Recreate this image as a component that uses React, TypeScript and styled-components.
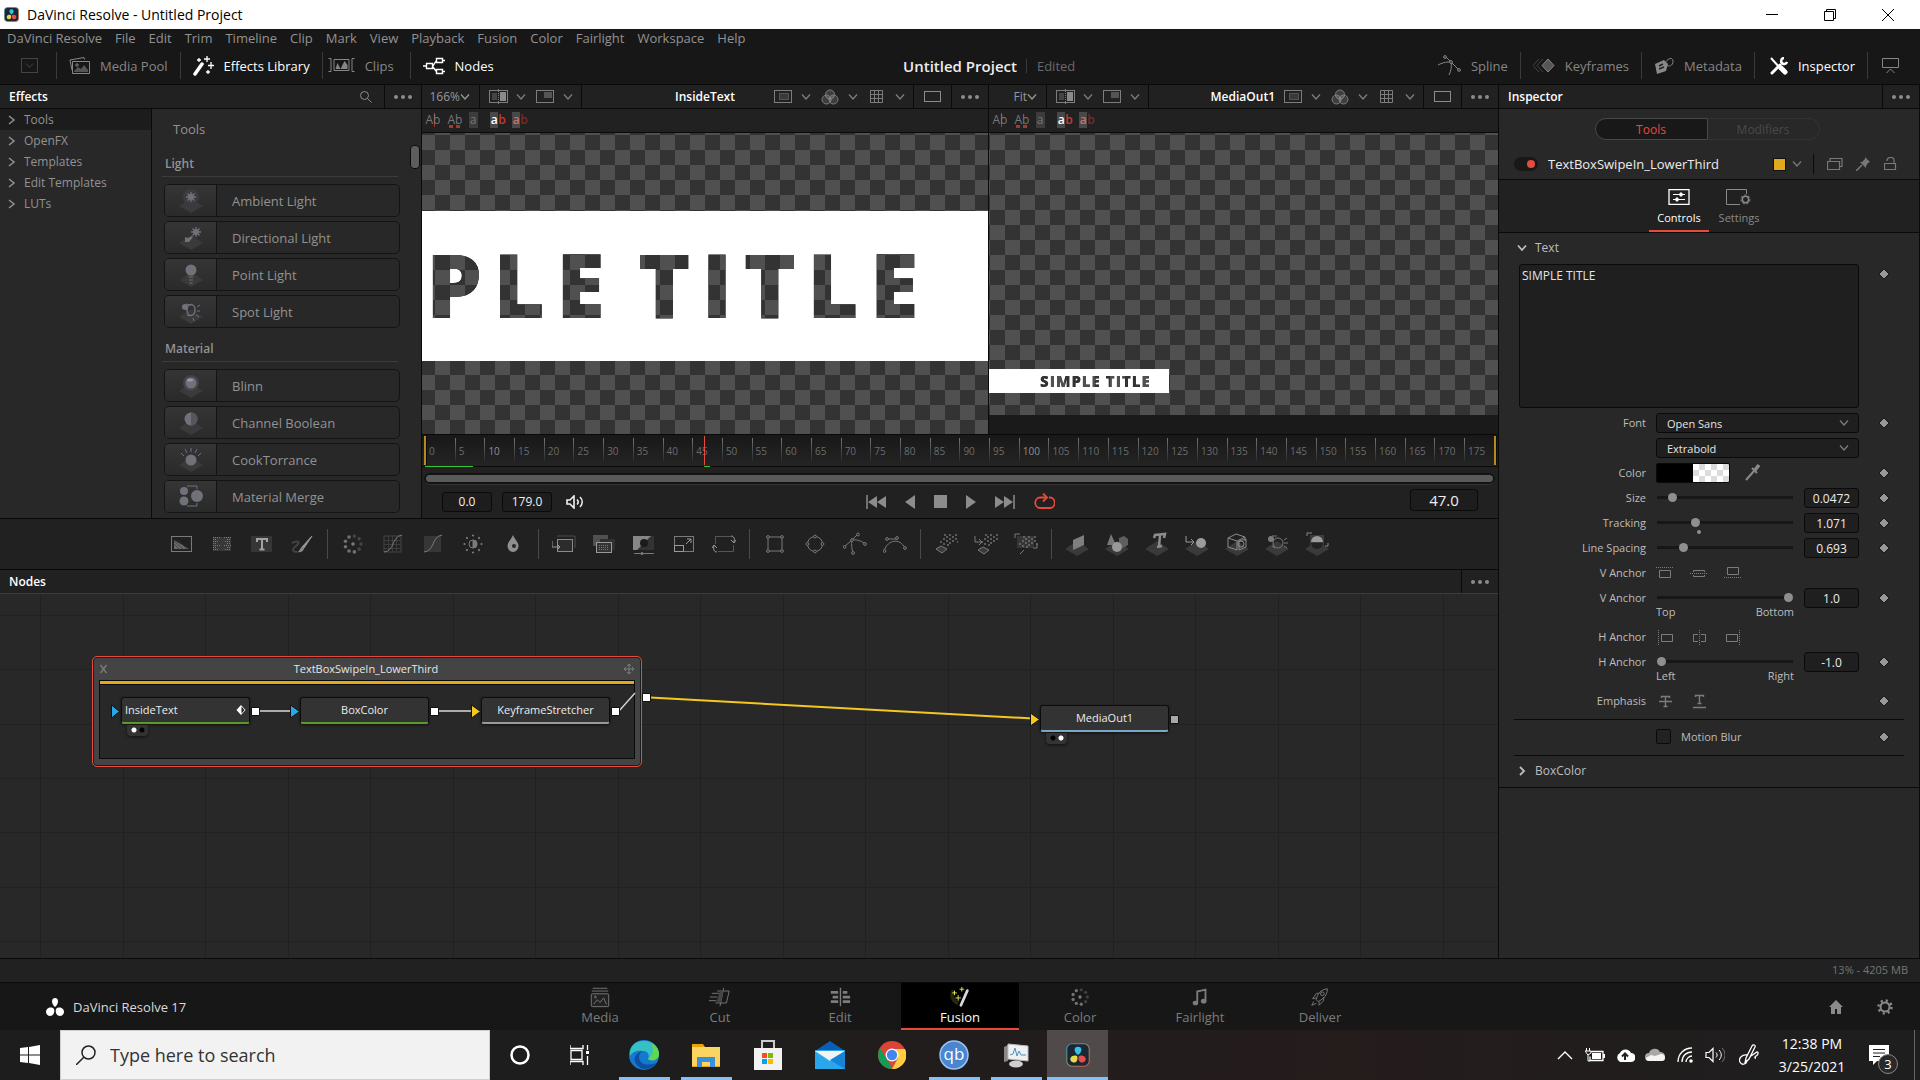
import React from "react";
import styled, { createGlobalStyle, css } from "styled-components";

const c = {
  bar: "#171717",
  panel: "#282828",
  head: "#212121",
  line: "#0a0a0a",
  text: "#929292",
  bright: "#ececec",
  red: "#e64b3d",
  yellow: "#e0a91e",
  sep: "#3a3a3a",
};

const GlobalStyle = createGlobalStyle`
  * { box-sizing: border-box; }
  body { margin: 0; background: ${c.bar}; }
  body, button, input, select, textarea {
    font-family: "Open Sans", "Noto Sans", sans-serif;
    font-size: 13px;
    color: ${c.text};
  }
  button { background: none; border: 0; padding: 0; margin: 0; }
  svg { display: block; flex: none; }
  h1, h2, h3, p, ul { margin: 0; padding: 0; font-size: inherit; font-weight: inherit; }
  ul { list-style: none; }
`;

/* ---------- drawing helpers ---------- */
type IconProps = { w?: number; h?: number; box?: string; children: React.ReactNode };
const Icon = ({ w = 24, h = 24, box, children }: IconProps) => (
  <svg width={w} height={h} viewBox={box || `0 0 ${w} ${h}`} fill="none" stroke="currentColor" aria-hidden="true">
    {children}
  </svg>
);
const Chevron = () => (
  <Icon w={10} h={6}><path d="M1 .5l4 4.500 4-4.500" strokeWidth="1.300" /></Icon>
);
const Dots = () => (
  <Icon w={18} h={4}><g fill="currentColor" stroke="none"><circle cx="2" cy="2" r="2" /><circle cx="9" cy="2" r="2" /><circle cx="16" cy="2" r="2" /></g></Icon>
);
const Plate = () => <path d="M0 17l12-8 12 8-12 7z" fill="#3a3a3b" stroke="none" />;
const DavinciLogo = ({ size }: { size: number }) => (
  <svg width={size} height={size} viewBox="0 0 32 32" aria-hidden="true">
    <defs>
      <linearGradient id={`rim${size}`} x1="0" y1="0" x2="1" y2="1">
        <stop offset="0" stopColor="#2d8fb0" /><stop offset=".5" stopColor="#8a8f6a" /><stop offset="1" stopColor="#e0503f" />
      </linearGradient>
    </defs>
    <rect x="1" y="1" width="30" height="30" rx="7" fill="#1b2733" stroke={`url(#rim${size})`} strokeWidth="1.500" />
    <path d="M16 5c6 0 6 7 0 11-6-4-6-11 0-11z" fill="#35c3ea" />
    <path d="M6 20c2-4 8-4 9-2 1 5-1 8-4 8-4 0-6-3-5-6z" fill="#e6dc4a" />
    <path d="M26 20c-2-4-8-4-9-2-1 5 1 8 4 8 4 0 6-3 5-6z" fill="#ee4b4b" />
  </svg>
);

/* ---------- shell ---------- */
const Page = styled.div`display: flex; flex-direction: column; min-height: 100vh; background: ${c.bar};`;

const TitleBar = styled.header`
  display: flex; align-items: center; height: 29px; background: #fff; color: #000;
  padding-left: 4px; gap: 8px;
`;
const TitleText = styled.h1`flex: 1; font-size: 14px; line-height: 28px;`;
const WinButtons = styled.div`display: flex; padding-right: 3px;`;
const WinButton = styled.button`
  width: 58px; height: 29px; display: grid; place-items: center; color: #000;
`;

const MenuBar = styled.nav`
  display: flex; height: 20px; align-items: center; gap: 13px; padding: 0 7px 2px;
`;
const MenuItem = styled.button`font-size: 13px; line-height: 18px; white-space: nowrap;`;

const TopBar = styled.div`
  display: grid; grid-template-columns: 1fr auto 1fr; height: 35px; align-items: center; padding-bottom: 2px;
`;
const TopSide = styled.div`display: flex; align-items: center; height: 33px;`;
const TopButton = styled.button<{ $on?: boolean; $wide?: boolean }>`
  display: flex; align-items: center; gap: 10px; height: 27px; padding: ${(p) => (p.$wide ? "0 16px 0 5px" : "0 12px")};
  font-size: 13px; white-space: nowrap;
  color: ${(p) => (p.$on ? "#fff" : "#868686")};
  & + & { border-left: 1px solid ${c.sep}; }
`;
const ProjectName = styled.h2`font-size: 15px; font-weight: 600; color: ${c.bright};`;
const Edited = styled.span`
  margin: 0 auto 0 9px; padding-left: 10px; border-left: 1px solid ${c.sep};
  font-size: 13px; line-height: 14px; color: #6a6a6a;
`;

const Work = styled.main`
  flex: 1; display: grid; grid-template-columns: minmax(0, 1fr) 421px;
  border-top: 1px solid ${c.line};
`;
const LeftCol = styled.div`display: flex; flex-direction: column; min-width: 0; border-right: 1px solid ${c.line};`;
const Upper = styled.div`display: flex; height: 434px; border-bottom: 1px solid ${c.line};`;

const PanelHead = styled.div<{ $red?: boolean }>`
  display: flex; align-items: stretch; height: 24px; flex: none; background: ${c.head};
  border-bottom: 1px solid ${(p) => (p.$red ? "#6e2723" : c.line)};
`;
const PanelTitle = styled.h2`
  flex: 1; padding-left: 9px; font-size: 12px; line-height: 23px; font-weight: 600; color: #fff;
`;
const HeadButton = styled.button<{ $divider?: boolean }>`
  display: grid; place-items: center; width: 37px; color: #8c8c8c;
  ${(p) => p.$divider && css`border-left: 1px solid ${c.line};`}
`;

/* ---------- effects ---------- */
const Effects = styled.section`
  width: 422px; flex: none; display: flex; flex-direction: column;
  background: ${c.panel}; border-right: 1px solid ${c.line};
`;
const EffectsBody = styled.div`display: flex; flex: 1; min-height: 0;`;
const Tree = styled.ul`width: 152px; border-right: 1px solid ${c.line};`;
const TreeItem = styled.li<{ $on?: boolean }>`
  background: ${(p) => (p.$on ? "#1c1c1c" : "transparent")};
  button { display: flex; align-items: center; gap: 8px; width: 100%; height: 21px; padding-left: 8px; font-size: 12px; }
`;
const ToolList = styled.div`flex: 1; overflow: hidden; padding: 8px 0 0 10px;`;
const ToolsCaption = styled.h3`padding-left: 11px; font-size: 13px; line-height: 24px;`;
const ToolGroup = styled.div`
  width: 238px; padding: 14px 0 0 2px;
  & + & { padding-top: 0; }
`;
const GroupTitle = styled.h3`
  margin: 0 2px 7px -2px; padding: 0 0 3px 3px; line-height: 18px; height: 22px;
  font-size: 12px; font-weight: 600; border-bottom: 1px solid #3c3c3c;
`;
const ToolRows = styled.div`display: flex; flex-direction: column; gap: 4px; padding-bottom: 12px;`;
const ToolRow = styled.button`
  display: flex; align-items: center; height: 33px; width: 236px; flex: none;
  border: 1px solid #141414; border-radius: 5px; font-size: 13px; text-align: left; overflow: hidden;
`;
const ToolThumb = styled.span`
  width: 52px; height: 31px; display: grid; place-items: center; margin-right: 15px;
  color: #70727a; border-right: 1px solid #141414; background: linear-gradient(#353535, #2a2a2a);
`;
const Scroller = styled.div`
  width: 11px; padding-top: 36px;
  &::before { content: ""; display: block; width: 8px; height: 22px; border-radius: 4px; background: #5d5d5d; border: 1px solid ${c.line}; }
`;

const star = (x: number, y: number, r: number) =>
  [0, 45, 90, 135].map((a) => (
    <path key={a} d={`M${x - r} ${y}h${2 * r}`} transform={`rotate(${a} ${x} ${y})`} strokeWidth="1.300" />
  ));
const effectArt: Record<string, React.ReactNode> = {
  "Ambient Light": <><circle cx="12" cy="8" r="8" fill="#3b3c3f" stroke="none" />{star(12, 8, 5)}<circle cx="12" cy="8" r="2.500" fill="currentColor" /></>,
  "Directional Light": <>{star(17, 6, 5)}<circle cx="17" cy="6" r="2.500" fill="currentColor" /><path d="M14 11l-4 5H6v-5l3 1 4-2z" fill="currentColor" stroke="none" /></>,
  "Point Light": <><circle cx="12" cy="7" r="5.500" fill="currentColor" stroke="none" /><path d="M9.500 14h5M10 17h4M10.500 20h3" /></>,
  "Spot Light": <><circle cx="6" cy="7" r="3" fill="currentColor" stroke="none" /><ellipse cx="12" cy="10" rx="4" ry="5.500" strokeWidth="1.500" /><path d="M7 4l5 1M8 15l3 1M18 7l3-2M18 11h3M17 15l3 2M14 18l1 3" /></>,
  Blinn: <><circle cx="12" cy="9" r="8" fill="#444548" stroke="none" /><circle cx="12" cy="9" r="5.500" fill="currentColor" stroke="none" /><ellipse cx="11" cy="6" rx="3" ry="1.500" fill="#9a9ba2" stroke="none" /></>,
  "Channel Boolean": <><circle cx="12" cy="8" r="6.500" fill="currentColor" stroke="none" /><path d="M12 1.500a6.500 6.500 0 010 13z" fill="#56575c" stroke="none" /></>,
  CookTorrance: <><circle cx="12" cy="12" r="5.500" fill="currentColor" stroke="none" /><path d="M12 4V0M8 5L6 1M16 5l2-4M5 8L2 5M19 8l3-3" /></>,
  "Material Merge": <><circle cx="5" cy="6" r="4" fill="currentColor" stroke="none" /><circle cx="5" cy="16" r="4.500" fill="currentColor" stroke="none" /><circle cx="18" cy="11" r="6" fill="currentColor" stroke="none" /><path d="M8 1h10v3M8 21h10v-3" /></>,
};
const EffectGroup = ({ title, items }: { title: string; items: string[] }) => (
  <ToolGroup>
    <GroupTitle>{title}</GroupTitle>
    <ToolRows>
      {items.map((n) => (
        <ToolRow key={n}>
          <ToolThumb><Icon>{n !== "Material Merge" && <Plate />}{effectArt[n]}</Icon></ToolThumb>
          {n}
        </ToolRow>
      ))}
    </ToolRows>
  </ToolGroup>
);

/* ---------- viewers ---------- */
const Center = styled.section`flex: 1; min-width: 0; display: flex; flex-direction: column; background: ${c.head};`;
const Viewers = styled.div`display: grid; grid-template-columns: 567fr 509fr; flex: 1;`;
const Viewer = styled.div`
  display: flex; flex-direction: column; min-width: 0;
  &:first-child { border-right: 1px solid ${c.line}; }
`;
const ViewHead = styled.div`
  display: grid; grid-template-columns: 1fr auto 1fr; height: 24px; border-bottom: 1px solid ${c.line};
  color: #7d7d7d;
`;
const HeadGroup = styled.div<{ $end?: boolean }>`display: flex; ${(p) => p.$end && "justify-content: flex-end;"}`;
const ZoomButton = styled.button`
  width: 58px; display: flex; align-items: center; justify-content: flex-end; padding-right: 9px;
  border-right: 1px solid ${c.line}; color: #989898; font-size: 12px;
`;
const ModeButtons = styled.div`
  display: flex; align-items: center; gap: 10px; padding: 0 8px 0 9px; border-right: 1px solid ${c.line};
`;
const ModeButton = styled.button`display: flex; align-items: center; justify-content: space-between; width: 37px; height: 23px; color: #7d7d7d;`;
const ViewTitle = styled.h3`font-size: 12px; line-height: 23px; font-weight: 600; color: #fff;`;
const GlyphBar = styled.div`display: flex; align-items: center; height: 24px; padding-bottom: 2px; border-bottom: 1px solid ${c.line};`;
const Glyph = styled.button<{ $kind: "cursor" | "boxes" | "plain" | "bold" | "dim" }>`
  width: 22px; height: 16px; font-size: 12px; line-height: 14px; color: #777;
  span { display: inline-block; height: 16px; line-height: 15px; }
  ${(p) => p.$kind === "cursor" && css`background: linear-gradient(#a8382e, #a8382e) 12px 1px / 1px 14px no-repeat;`}
  ${(p) => p.$kind === "boxes" && css`
    background:
      linear-gradient(#a8382e, #a8382e) 5px 13px / 4px 3px no-repeat,
      linear-gradient(#a8382e, #a8382e) 12px 13px / 4px 3px no-repeat;
  `}
  ${(p) => p.$kind === "plain" && css`width: 14px; margin-right: 7px; span { background: #3c3c3c; width: 9px; }`}
  ${(p) => (p.$kind === "bold" || p.$kind === "dim") && css`
    font-weight: 600; color: ${p.$kind === "bold" ? "#c33a30" : "#7a2b27"};
    span { background: #484848; width: 8px; color: ${p.$kind === "bold" ? "#fff" : "#c9736c"}; }
  `}
`;
const checker = "repeating-conic-gradient(#333 0 25%, #505050 0 50%)";
const Canvas = styled.div<{ $x: number }>`
  flex: 1; min-height: 0; overflow: hidden; isolation: isolate;
  background: ${checker} ${(p) => p.$x}px 2px / 30px 30px;
`;
/* black lettering on a white strip; "lighten" lets the checkerboard show inside the letters */
const BigStrip = styled.div`
  display: flex; gap: 22px; margin-top: 78px; height: 150px; background: #fff; color: #000; mix-blend-mode: lighten;
  padding-left: 4px; font-size: 89px; line-height: 146px; font-weight: 800; letter-spacing: 11px;
  white-space: nowrap; overflow: hidden;
`;
const MediaArea = styled.div`flex: 1; display: flex; flex-direction: column; padding-bottom: 19px; background: #1a1a1a;`;
const SmallStrip = styled.div`
  display: flex; gap: 5px; margin-top: 236px; width: 180px; height: 24px; background: #fff; color: #000; mix-blend-mode: lighten;
  padding-left: 51px; font-size: 15px; line-height: 24px; font-weight: 800; letter-spacing: 1px; white-space: nowrap;
`;

const Ruler = styled.div`
  position: relative; height: 33px; display: flex; padding: 3px 4px 0 3px;
  border-top: 1px solid ${c.line}; border-bottom: 1px solid ${c.line};
  background: linear-gradient(#181818, #242424);
`;
const Tick = styled.span<{ $on?: boolean }>`
  flex: 1 1 0; min-width: 0; height: 24px; padding-left: 3px; font-size: 10px; line-height: 26px; color: ${(p) => (p.$on ? "#909090" : "#6c6c6c")};
  border-left: 1px solid; border-image: linear-gradient(#777, #242424) 1;
  &:first-child { border-image: none; border-color: transparent; }
`;
const RangeBar = styled.i<{ $end?: boolean }>`
  position: absolute; top: 1px; bottom: 1px; width: 3px; background: #b38a1e; border: solid ${c.line}; border-width: 0 1px 0 0;
  ${(p) => (p.$end ? "right: 1px;" : "left: 2px;")}
`;
const Playhead = styled.i`
  position: absolute; top: 1px; bottom: 1px; left: calc(3px + (100% - 7px) * 47 / 180); width: 1px; background: ${c.red};
`;
const Cached = styled.i<{ $from: number; $to: number }>`
  position: absolute; bottom: -1px; height: 1px; background: #3bc23b;
  left: calc(3px + (100% - 7px) * ${(p) => p.$from} / 180);
  width: calc((100% - 7px) * ${(p) => p.$to - p.$from} / 180);
`;
const TimeScroll = styled.div`
  margin: 6px 3px 0 2px; height: 12px; border-radius: 6px; background: #131313; padding: 2px; border-bottom: 1px solid #333;
  &::before { content: ""; display: block; height: 7px; border-radius: 4px; background: #5a5a5a; }
`;
const Transport = styled.div`display: grid; grid-template-columns: 1fr auto 1fr; align-items: center; height: 33px;`;
const TransportSide = styled.div<{ $end?: boolean }>`
  display: flex; align-items: center; gap: 10px; padding: 0 20px; color: #f0f0f0;
  ${(p) => p.$end && "justify-content: flex-end; padding-bottom: 4px;"}
`;
const MuteButton = styled.button`margin-left: 4px; color: #f0f0f0;`;
const TimeField = styled.input<{ $big?: boolean }>`
  width: ${(p) => (p.$big ? 68 : 50)}px; height: ${(p) => (p.$big ? 22 : 20)}px; padding: 0; text-align: center;
  font-size: ${(p) => (p.$big ? 15 : 12)}px; color: #f0f0f0; background: #1d1d1d; border: 1px solid ${c.line}; border-radius: 3px;
`;
const PlayButtons = styled.div`display: flex; align-items: center; gap: 19px; color: #8c8c8c; button { color: inherit; }`;

/* ---------- tool strip ---------- */
const Strip = styled.div`
  display: flex; justify-content: center; align-items: center; height: 51px; flex: none;
  background: ${c.head}; border-bottom: 1px solid ${c.line};
`;
const StripGroup = styled.div`
  display: flex; height: 30px; padding: 0 5px;
  & + & { border-left: 1px solid #4a4a4a; }
`;
const StripButton = styled.button`display: grid; place-items: center; width: 40px; color: #7a7a7a;`;

const pt = (x: number, y: number) => <circle cx={x} cy={y} r="1.400" fill={c.head} />;
const dotField = (ox: number, oy: number) => (
  <g fill="currentColor" stroke="none">
    {[[2, 8], [5, 5], [5, 10], [8, 3], [8, 7], [11, 1], [11, 5], [11, 9], [14, 3], [14, 7], [17, 1], [17, 5], [9, 11], [6, 1], [19, 8]].map(([x, y]) => (
      <circle key={`${x}-${y}`} cx={x + ox} cy={y + oy} r=".9" />
    ))}
  </g>
);
const ringDots = (
  <g fill="currentColor" stroke="none">
    {[0, 1, 2, 3, 4, 5, 6, 7, 8].map((i) => (
      <circle key={i} cx={12 + 8 * Math.cos((i * 40 * Math.PI) / 180)} cy={12 + 8 * Math.sin((i * 40 * Math.PI) / 180)} r="1.800" opacity={i > 6 || i < 2 ? 0.4 : 0.9} />
    ))}
    <circle cx="12" cy="12" r="1.800" />
  </g>
);
const stripIcons: React.ReactNode[][] = [
  [
    <><rect x="1.500" y="4.500" width="20" height="15" /><path d="M4 8l15 9H4z" fill="#6a6a6a" stroke="none" /><path d="M4 12l6 6M4 9l10 9M8 8l9 9" stroke="#333" strokeWidth=".7" /></>,
    <><rect x="3" y="5" width="18" height="14" fill="#383838" stroke="none" /><path d="M3 5.500h7M3 7.500h4M3 9.500h6M3 11.500h4M3 13.500h7M3 15.500h4M3 17.500h6M14 5.500h7M17 7.500h4M15 9.500h6M17 11.500h4M14 13.500h7M17 15.500h4M15 17.500h6" strokeDasharray="1 1" /></>,
    <><rect x="1" y="4" width="21" height="16" rx="1" fill="#363636" stroke="none" /><path d="M7 10V7h10v3M12 7v11M9.500 17.500h5" strokeWidth="2" stroke="#a2a2a2" /></>,
    <><path d="M22 4l-8 12-2-1z" fill="#999" stroke="#999" /><path d="M12 15c-2 0-2 5-5 5 4 1 7-1 7-4z" fill="#888" stroke="none" /><path d="M2 11c6-3 9-1 4 3s-3 6 1 6" stroke="#444" strokeWidth="2" /></>,
  ],
  [
    ringDots,
    <><rect x="3" y="4" width="17" height="16" stroke="#444" /><path d="M7.500 4v16M11.500 4v16M15.500 4v16M3 8.500h17M3 12.500h17M3 16.500h17" stroke="#3c3c3c" /><path d="M3 20C14 19 10 5 21 3" /></>,
    <><rect x="3" y="4" width="17" height="16" fill="#363636" stroke="none" /><path d="M3 20C14 19 10 5 21 3" /></>,
    <><circle cx="12" cy="12" r="4" /><path d="M12 8a4 4 0 010 8z" fill="currentColor" />{[0, 45, 90, 135, 180, 225, 270, 315].map((a) => <circle key={a} cx="12" cy="3.500" r="1.100" fill="currentColor" stroke="none" transform={`rotate(${a} 12 12)`} />)}</>,
    <><path d="M12 3c2 5 5.500 7 5.500 11a5.500 6 0 01-11 0C6.500 10 10 8 12 3z" fill="#8f8f8f" stroke="none" /><circle cx="13" cy="14" r="2" fill="#262626" stroke="none" /></>,
  ],
  [
    <><path d="M5 4h18v12" stroke="#4c4c4c" /><rect x="5.500" y="7.500" width="15" height="12" stroke="#8a8a8a" fill="#2c2c2c" /><path d="M0 9v6h8M5 12l3 3-3 3" stroke="#9a9a9a" /></>,
    <><rect x="1" y="3" width="15" height="11" fill="#505050" stroke="none" /><rect x="8" y="7" width="15" height="11" fill="#303030" stroke="none" /><rect x="4.500" y="10.500" width="15" height="10" fill="#333" stroke="#999" /><path d="M7 13.500h10M7 15.500h10M7 17.500h10" stroke="#777" strokeDasharray="1 1" /></>,
    <><rect x="1" y="4" width="21" height="14" fill="#333" stroke="none" /><path d="M1 4h18L5 18H1z" fill="#878787" stroke="none" /><circle cx="12" cy="11" r="4" fill="#1b1b1b" stroke="none" /><path d="M2 21.500h20" /><circle cx="10" cy="21.500" r="1.500" fill="currentColor" stroke="none" /></>,
    <><rect x="2.500" y="4.500" width="19" height="15" /><rect x="2.500" y="13.500" width="9" height="6" stroke="#9a9a9a" /><path d="M14 12l5-5M15 7h4v4" stroke="#9a9a9a" /></>,
    <><path d="M3.500 12V4.500h16M21.500 13v6.500H6" stroke="#555" /><path d="M19 4c3 0 4 3 3 6M19 8l3 3 2-3M5 20c-3 0-4-3-3-6M0 16l2-3 3 3" stroke="#9a9a9a" /></>,
  ],
  [
    <><rect x="5" y="5" width="14" height="14" />{pt(5, 5)}{pt(19, 5)}{pt(5, 19)}{pt(19, 19)}</>,
    <><circle cx="12" cy="12" r="7.500" />{pt(12, 4.5)}{pt(4.5, 12)}{pt(19.5, 12)}{pt(12, 19.5)}</>,
    <><path d="M1 15l8-7 6-6M9 8c-1 5 0 9 1 13M9 8c6-1 11 2 13 4" />{pt(1.5, 15)}{pt(9, 8)}{pt(15, 2.5)}{pt(10, 21)}{pt(22, 12)}</>,
    <><path d="M1 19c4-12 16-13 21-3M4 7h10" />{pt(1.5, 19)}{pt(4, 7)}{pt(14, 6)}{pt(22, 16)}</>,
  ],
  [
    <><path d="M2 17l5-3 6 3-5 4z" fill="#3a3a3a" />{dotField(5, 2)}</>,
    <><path d="M4 18l5-3 6 3-5 4z" fill="#3a3a3a" />{dotField(6, 2)}<path d="M1 4v6h6M5 7l3 3-3 3" /></>,
    <><rect x="3" y="4" width="17" height="12" fill="#363636" stroke="none" />{dotField(4, 4)}<path d="M1 6V2h5M23 12v4h-4M6 22l4-4" /></>,
  ],
  [
    <><Plate /><path d="M8 8l11-5v10L8 18z" fill="#7e7e7e" stroke="none" /></>,
    <><Plate /><path d="M6 2l5 11H2z" fill="#777" stroke="none" /><path d="M14 6l5-2 4 3v6l-5 3-4-2z" fill="#5f5f5f" stroke="none" /><circle cx="12" cy="15" r="5" fill="#999" stroke="none" /></>,
    <><Plate /><path d="M9 6l1-3 10-1-1 4M15 3l-1 12M12 15l5-1" strokeWidth="2.500" stroke="#8d8d8d" /></>,
    <><Plate /><path d="M1 4v6h8M6 7l3 3-3 3" stroke="#999" /><circle cx="16" cy="11" r="5" fill="#9b9b9b" stroke="none" /></>,
    <><Plate /><path d="M3 6l8-4 9 3v4M3 6l9 3v9l-9-3zM12 9l8-4M14 9l7-2v8l-7 3z" stroke="#8a8a8a" /><circle cx="16" cy="12" r="3" stroke="#8a8a8a" /></>,
    <><Plate /><circle cx="6" cy="7" r="3" fill="currentColor" stroke="none" /><circle cx="13" cy="11" r="5" /><path d="M7 4h5M7 14l3 2M19 8l3-2M19 11h4M19 14l3 2" /></>,
    <><Plate /><rect x="5" y="3" width="14" height="12" fill="#3c3c3c" stroke="none" /><path d="M6 10a6 6 0 0112 0z" fill="#9b9b9b" stroke="none" /><path d="M6 11a6 6 0 0012 0z" fill="#222" stroke="none" /><path d="M2 4V1h5M23 11v3h-3" stroke="#8a8a8a" /></>,
  ],
];

/* ---------- nodes ---------- */
const NodesPanel = styled.section`flex: 1; display: flex; flex-direction: column; min-height: 0;`;
const gridLine = "#212121";
const Flow = styled.div`
  position: relative; flex: 1; min-height: 360px; overflow: hidden; background-color: ${c.panel};
  background-image:
    linear-gradient(90deg, ${gridLine} 1px, #0000 1px), linear-gradient(90deg, ${gridLine} 1px, #0000 1px),
    linear-gradient(${gridLine} 1px, #0000 1px), linear-gradient(${gridLine} 1px, #0000 1px), linear-gradient(${gridLine} 1px, #0000 1px);
  background-size: 165px 100%, 165px 100%, 100% 163px, 100% 163px, 100% 163px;
  background-position: 40px 0, 123px 0, 0 21px, 0 75px, 0 130px;
`;
const GroupBox = styled.div`
  position: absolute; left: 92px; top: 62px; width: 550px; height: 111px;
  display: flex; flex-direction: column; padding: 0 6px 7px;
  background: #444; border: 1px solid ${c.red}; border-radius: 5px; box-shadow: inset 0 0 0 1px #1c1c1c;
`;
const GroupHead = styled.div`
  display: flex; align-items: center; justify-content: space-between; height: 23px;
  font-size: 11px; color: #e6e6e6; svg { color: #7c7c7c; }
`;
const GroupBody = styled.div`flex: 1; border: 1px solid ${c.line}; background: #282828; &::before { content: ""; display: block; height: 3px; background: ${c.yellow}; border-bottom: 1px solid ${c.line}; }`;
const NodeBox = styled.div<{ $x: number; $y: number; $tone: string; $left?: boolean }>`
  position: absolute; left: ${(p) => p.$x}px; top: ${(p) => p.$y}px; width: 129px; height: 27px;
  display: flex; align-items: center; justify-content: ${(p) => (p.$left ? "space-between" : "center")};
  padding: 0 3px; font-size: 11px; line-height: 22px; color: #ececec; background: #333;
  border: 1px solid #0d0d0d; border-bottom: 2px solid ${(p) => p.$tone}; border-radius: 3px; box-shadow: 0 1px 3px #0009;
`;
const ViewDots = styled.div<{ $x: number; $y: number; $second?: boolean }>`
  position: absolute; left: ${(p) => p.$x}px; top: ${(p) => p.$y}px; width: 21px; height: 11px; border-radius: 0 0 4px 4px;
  box-shadow: 0 1px 3px #0009;
  background:
    radial-gradient(circle at 7px 5px, ${(p) => (p.$second ? "#000" : "#fff")} 2px, #0000 3px),
    radial-gradient(circle at 15px 5px, ${(p) => (p.$second ? "#fff" : "#000")} 2px, #0000 3px), #333;
`;
const Wires = styled.svg`position: absolute; inset: 0; width: 100%; height: 100%;`;

/* ---------- inspector ---------- */
const Inspector = styled.aside`display: flex; flex-direction: column; background: ${c.panel}; border-right: 1px solid ${c.line};`;
const TabPill = styled.div`display: grid; grid-template-columns: 113px 112px; justify-content: center; padding: 9px 4px 11px 0;`;
const PillButton = styled.button<{ $on?: boolean }>`
  height: 22px; font-size: 12px; border: 1px solid ${(p) => (p.$on ? "#484848" : "#333")};
  color: ${(p) => (p.$on ? c.red : "#484848")}; background: ${(p) => (p.$on ? "#181818" : "none")};
  border-radius: ${(p) => (p.$on ? "11px 0 0 11px" : "0 11px 11px 0")};
  ${(p) => !p.$on && "border-left: 0;"}
`;
const NameRow = styled.div`display: flex; align-items: center; height: 26px; margin-bottom: 2px; padding: 0 22px 0 15px; color: #787878;`;
const Toggle = styled.button`
  width: 24px; height: 14px; border-radius: 7px; background: #181818; display: flex; justify-content: flex-end; align-items: center; padding-right: 3px;
  &::before { content: ""; width: 8px; height: 8px; border-radius: 4px; background: ${c.red}; }
`;
const NodeName = styled.h3`flex: 1; padding-left: 10px; font-size: 13px; color: ${c.bright};`;
const Swatch = styled.button`width: 11px; height: 11px; background: ${c.yellow}; outline: 1px solid #111; margin-right: 7px;`;
const NameIcons = styled.div`display: flex; align-items: center; gap: 13px; margin-left: 11px; padding-left: 13px; height: 20px; border-left: 1px solid ${c.line}; button { color: #787878; }`;
const ModeTabs = styled.div`
  display: flex; justify-content: center; height: 54px; background: ${c.head};
  border: solid ${c.line}; border-width: 1px 0;
`;
const ModeTab = styled.button<{ $on?: boolean }>`
  width: 60px; display: flex; flex-direction: column; align-items: center; gap: 5px; padding-top: 9px; font-size: 11px; line-height: 16px;
  color: ${(p) => (p.$on ? "#fff" : "#8a8a8a")}; border-bottom: 2px solid ${(p) => (p.$on ? c.red : "transparent")};
`;
const Section = styled.button`
  display: flex; align-items: center; gap: 8px; height: 31px; padding: 0 0 2px 18px; font-size: 12px; color: #bdbdbd;
`;
const Field = styled.div<{ $tall?: boolean }>`
  display: grid; grid-template-columns: 127px minmax(0, 1fr) 12px; column-gap: 10px; align-items: start;
  height: ${(p) => (p.$tall ? 39 : 25)}px; padding: 2px 29px 0 20px; line-height: 20px; color: #bdbdbd; font-size: 11px;
`;
const FieldLabel = styled.label`text-align: right; white-space: nowrap;`;
const Control = styled.div`display: flex; align-items: flex-start; gap: 10px; margin-right: 9px;`;
const Key = styled.button`height: 20px; display: grid; place-items: center; color: #97979d;`;
const TextRow = styled.div`display: grid; grid-template-columns: minmax(0, 1fr) 12px; column-gap: 19px; padding: 0 29px 3px 20px; align-items: start;`;
const TextBox = styled.textarea`
  height: 144px; resize: none; padding: 2px; color: #e4e4e4; background: #1f1f1f; font-size: 12px; line-height: 18px;
  border: 1px solid ${c.line}; border-radius: 3px; outline: 0;
`;
const SelectWrap = styled.div`
  flex: 1; display: grid; align-items: center; color: #7c7c7c;
  > * { grid-area: 1 / 1; } > svg { justify-self: end; margin-right: 10px; pointer-events: none; }
`;
const Select = styled.select`
  appearance: none; width: 100%; height: 20px; padding: 0 10px; font-size: 11px; color: #e4e4e4; background: #1f1f1f;
  border: 1px solid ${c.line}; border-radius: 3px;
`;
const ColorWell = styled.button`
  width: 74px; height: 20px; border: 1px solid ${c.line}; border-radius: 2px; margin-right: 4px;
  background: linear-gradient(90deg, #000 50%, #0000 50%), repeating-conic-gradient(#dcdcdc 0 25%, #fff 0 50%) 0 0 / 12px 12px;
`;
const PickButton = styled.button`color: #8a8a8a;`;
const SliderCol = styled.div`flex: 1; display: flex; flex-direction: column; padding-top: 2px; margin: 0 1px;`;
const Slider = styled.input`
  appearance: none; width: 100%; height: 15px; margin: 0; background: linear-gradient(#171717, #171717) 0 6px / 100% 3px no-repeat;
  &::-webkit-slider-thumb { appearance: none; width: 9px; height: 9px; border-radius: 50%; background: #8f8f8f; }
`;
const SliderEnds = styled.div`display: flex; justify-content: space-between; line-height: 14px; margin: 0 -1px;`;
const DefaultMark = styled.i`width: 4px; height: 4px; border-radius: 2px; background: #8f8f8f; margin-left: 40px;`;
const NumberField = styled.input`
  width: 55px; height: 20px; padding: 0; text-align: center; font-size: 12px; color: #ececec;
  background: #1f1f1f; border: 1px solid ${c.line}; border-radius: 3px;
`;
const AnchorButtons = styled.div`display: flex; gap: 16px; height: 20px; align-items: center; button { color: #7c7c7c; }`;
const Rule = styled.hr<{ $flush?: boolean }>`
  width: 390px; max-width: 93%; height: 1px; margin: 5px 15px ${(p) => (p.$flush ? 0 : 5)}px; border: 0; background: ${c.line};
`;
const Check = styled.input`
  appearance: none; width: 15px; height: 15px; margin: 2px 0 0; border: 1px solid ${c.line}; border-radius: 2px; background: #222;
`;
const EndLine = styled.hr`width: 100%; height: 1px; border: 0; margin: 0; background: ${c.line};`;

const Diamond = () => <Icon w={12} h={12}><path d="M6 1l5 5-5 5-5-5z" fill="currentColor" stroke="#1a1a1a" /></Icon>;
const KeyButton = ({ name }: { name: string }) => <Key aria-label={`Keyframe ${name}`}><Diamond /></Key>;

type SlideProps = { id: string; label: string; pos: number; value: string; ends?: [string, string]; mark?: boolean };
const SlideField = ({ id, label, pos, value, ends, mark }: SlideProps) => (
  <Field $tall={!!ends}>
    <FieldLabel htmlFor={id}>{label}</FieldLabel>
    <Control>
      <SliderCol>
        <Slider type="range" aria-label={`${label} slider`} min={0} max={100} defaultValue={pos} />
        {ends && <SliderEnds><span>{ends[0]}</span><span>{ends[1]}</span></SliderEnds>}
        {mark && <DefaultMark />}
      </SliderCol>
      <NumberField id={id} defaultValue={value} />
    </Control>
    <KeyButton name={label} />
  </Field>
);
type IconRowProps = { label: string; names: string[]; icons: React.ReactNode[]; keyed?: boolean };
const IconField = ({ label, names, icons, keyed }: IconRowProps) => (
  <Field>
    <FieldLabel as="span">{label}</FieldLabel>
    <AnchorButtons role="group" aria-label={label}>
      {icons.map((g, i) => <button key={names[i]} aria-label={names[i]}><Icon w={18} h={16}>{g}</Icon></button>)}
    </AnchorButtons>
    {keyed && <KeyButton name={label} />}
  </Field>
);

/* ---------- footer ---------- */
const Status = styled.div`
  height: 25px; flex: none; padding-right: 12px; text-align: right; font-size: 11px; line-height: 22px; color: #757575;
  background: ${c.head}; border: solid ${c.line}; border-width: 1px 0;
`;
const PageBar = styled.nav`display: grid; grid-template-columns: 1fr auto 1fr; height: 47px; align-items: center;`;
const Brand = styled.div`display: flex; align-items: center; gap: 9px; padding-left: 46px; color: #dadada; font-size: 13px;`;
const PageTabs = styled.div`display: flex; gap: 2px; height: 47px;`;
const PageTab = styled.button<{ $on?: boolean }>`
  width: 118px; display: flex; flex-direction: column; align-items: center; padding-top: 3px;
  font-size: 13px; line-height: 18px; color: ${(p) => (p.$on ? "#fff" : "#7c7c7c")};
  background: ${(p) => (p.$on ? "#000" : "none")}; border-bottom: 2px solid ${(p) => (p.$on ? c.red : "transparent")};
`;
const PageEnd = styled.div`display: flex; justify-content: flex-end; gap: 34px; padding-right: 27px; button { color: #8a8a8a; }`;

const Taskbar = styled.footer`
  display: flex; height: 50px; flex: none; color: #fff;
  background: linear-gradient(90deg, #1d1d1d 30%, #251c1c 70%, #1e1e1e 95%);
`;
const TaskButton = styled.button<{ $w?: number }>`width: ${(p) => p.$w || 60}px; display: grid; place-items: center; color: #fff;`;
const SearchBox = styled.label`
  display: flex; align-items: center; gap: 14px; width: 430px; height: 50px; padding-left: 15px; background: #f2f2f2; border: 1px solid #cfcfcf; color: #222;
`;
const SearchInput = styled.input`
  flex: 1; min-width: 0; border: 0; padding: 0; background: none; font-size: 18px; outline: 0; &::placeholder { color: #333; opacity: 1; }
`;
const Apps = styled.div`display: flex; padding-left: 3px;`;
const TaskApp = styled.button<{ $open?: boolean; $active?: boolean }>`
  width: ${(p) => (p.$active ? 61 : 62)}px; display: grid; align-items: center; justify-items: center;
  background: ${(p) => (p.$active ? "#514a4a" : "none")};
  &::after {
    content: ""; align-self: end; width: ${(p) => (p.$active ? 61 : 51)}px; height: 3px; grid-area: 1 / 1;
    background: ${(p) => (p.$open ? "#83c0fa" : "transparent")};
  }
  svg { grid-area: 1 / 1; }
`;
const Tray = styled.div`display: flex; align-items: center; margin-left: auto;`;
const TrayButton = styled.button`width: 30px; height: 50px; display: grid; place-items: center; color: #fff;`;
const Clock = styled.time`width: 88px; text-align: center; font-size: 14px; line-height: 23px;`;
const Notice = styled.button`position: relative; width: 44px; height: 50px; margin-left: 5px; padding: 0 0 0 8px; color: #fff;`;
const Badge = styled.span`
  position: absolute; left: 17px; top: 24px; width: 20px; height: 20px; border: 1px solid #888; border-radius: 10px; background: #2b2828;
  color: #fff; font-size: 13px; line-height: 18px; text-align: center;
`;
const Peek = styled.button`width: 6px; border-left: 1px solid #666; align-self: stretch; margin-left: 9px;`;

/* ---------- data ---------- */
const menus = ["DaVinci Resolve", "File", "Edit", "Trim", "Timeline", "Clip", "Mark", "View", "Playback", "Fusion", "Color", "Fairlight", "Workspace", "Help"];
const tree = ["Tools", "OpenFX", "Templates", "Edit Templates", "LUTs"];
const pages = ["Media", "Cut", "Edit", "Fusion", "Color", "Fairlight", "Deliver"];

const ViewerHeader = ({ zoom, title }: { zoom: string; title: string }) => (
  <>
    <ViewHead>
      <HeadGroup>
        <ZoomButton>{zoom}<Chevron /></ZoomButton>
        <ModeButtons>
          <ModeButton aria-label="Split view">
            <Icon w={20} h={16}><rect x=".5" y="1.500" width="18" height="12" /><rect x="3" y="4" width="5" height="7" fill="#444" stroke="none" /><rect x="11" y="3" width="6" height="9" fill="#8a8a8a" stroke="none" /><path d="M9.500 0v16" strokeDasharray="1 1" /></Icon>
            <Chevron />
          </ModeButton>
          <ModeButton aria-label="Sub view">
            <Icon w={19} h={14}><rect x=".5" y=".5" width="17" height="12" /><rect x="8" y="2" width="8" height="6" fill="#555" stroke="none" /></Icon>
            <Chevron />
          </ModeButton>
        </ModeButtons>
      </HeadGroup>
      <ViewTitle>{title}</ViewTitle>
      <HeadGroup $end>
        <ModeButtons>
          <ModeButton aria-label="Region of interest"><Icon w={19} h={14}><rect x=".5" y=".5" width="17" height="12" /><rect x="5.500" y="3.500" width="9" height="6" strokeDasharray="1 1" fill="#3a3a3a" /></Icon><Chevron /></ModeButton>
          <ModeButton aria-label="Colour channels"><Icon w={18} h={16}><circle cx="9" cy="5.500" r="4.500" fill="#ffffff22" /><circle cx="5.500" cy="10.500" r="4.500" fill="#ffffff22" /><circle cx="12.500" cy="10.500" r="4.500" fill="#ffffff22" /></Icon><Chevron /></ModeButton>
          <ModeButton aria-label="Guides"><Icon w={16} h={14} box="-2 0 16 14"><path d="M.5.5h12v12H.5zM4.500.5v12M8.500.5v12M.5 4.500h12M.5 8.500h12" /></Icon><Chevron /></ModeButton>
        </ModeButtons>
        <HeadButton aria-label="Single viewer"><Icon w={18} h={12}><rect x=".5" y=".5" width="16" height="10" /></Icon></HeadButton>
        <HeadButton $divider aria-label="Viewer options"><Dots /></HeadButton>
      </HeadGroup>
    </ViewHead>
    <GlyphBar>
      <Glyph $kind="cursor">Ab</Glyph>
      <Glyph $kind="boxes">Ab</Glyph>
      <Glyph $kind="plain"><span>a</span></Glyph>
      <Glyph $kind="bold"><span>a</span>b</Glyph>
      <Glyph $kind="dim"><span>a</span>b</Glyph>
    </GlyphBar>
  </>
);

const PageIcon = ({ name }: { name: string }) => {
  const art: Record<string, React.ReactNode> = {
    Media: <><rect x="2.500" y="8.500" width="19" height="14" rx="1" fill="#222" /><path d="M3 5.500h18M4 2.500h16" /><path d="M5 20l4-5 3 3 4-5 3 7" /><circle cx="7" cy="12" r="1" /></>,
    Cut: <><path d="M9 5.500h13l-3 13H7M16 2l-4 20M3 8h8M1 12h8M0 16h8" /><path d="M12 5h4l-3 13H8z" fill="#444" stroke="none" /></>,
    Edit: <><path d="M12.500 2v20" strokeWidth="1.500" /><path d="M2 7h8M4 12h6M2 17h8M15 7h5M15 12h8M15 17h8" strokeWidth="3" /></>,
    Fusion: <><path d="M5 5c-4 6 0 12 5 14" stroke="#26260f" strokeWidth="4" /><path d="M20 5l-7 16" stroke="#d8d8d8" strokeWidth="3" strokeLinecap="round" /><path d="M6 5v5M3.500 7.500h5M14 1v5M11.500 3.500h5M10 10v6M7 13h6" stroke="#eaf05a" /></>,
    Color: ringDots,
    Fairlight: <><path d="M9 18V6l9-2v12" strokeWidth="2" /><ellipse cx="7" cy="18.500" rx="3" ry="2.500" fill="currentColor" stroke="none" /><ellipse cx="16" cy="16.500" rx="3" ry="2.500" fill="currentColor" stroke="none" /></>,
    Deliver: <><path d="M8 15c1-7 5-11 12-12 0 7-4 11-10 14zM8 13l-4 1 4-6h3M11 17l0 4 5-5v-4M5 17l-2 4 5-2" /><circle cx="14.500" cy="8.500" r="2" /></>,
  };
  return <Icon w={22} h={22} box="0 0 24 24">{art[name]}</Icon>;
};

export default function App() {
  return (
    <Page>
      <GlobalStyle />
      <TitleBar>
        <DavinciLogo size={15} />
        <TitleText>DaVinci Resolve - Untitled Project</TitleText>
        <WinButtons>
          <WinButton aria-label="Minimise"><Icon w={12} h={12}><path d="M0 5.500h12" /></Icon></WinButton>
          <WinButton aria-label="Restore"><Icon w={12} h={12}><path d="M.5 2.500h9v9h-9zM2.500 2V.5h9v9H10" /></Icon></WinButton>
          <WinButton aria-label="Close"><Icon w={12} h={12}><path d="M0 0l12 12M12 0L0 12" /></Icon></WinButton>
        </WinButtons>
      </TitleBar>

      <MenuBar>{menus.map((m) => <MenuItem key={m}>{m}</MenuItem>)}</MenuBar>

      <TopBar>
        <TopSide>
          <TopButton aria-label="Layout presets">
            <Icon w={32} h={16} box="-8 0 32 16"><g stroke="#444"><rect x="1.500" y=".5" width="16" height="14" /><path d="M6 5.500l3.500 4 3.500-4" /></g></Icon>
          </TopButton>
          <TopButton>
            <Icon w={21} h={18}><path d="M3.500 4.500h17v12h-17zM3 13L1 3l14-2.500.5 2" /><path d="M5 14l4-4 3 2 3-4 4 5v2H5z" fill="#555" stroke="none" /><circle cx="8" cy="8" r="1.200" /></Icon>
            Media Pool
          </TopButton>
          <TopButton $on>
            <Icon w={21} h={20}><path d="M2 18L9 8" strokeWidth="3.500" strokeLinecap="round" /><path d="M14 0v6M11 3h6M18 6v7M15 9.500h6M6 2v4M4 4h4M15 14v4M13 16h4" strokeWidth="1.300" /></Icon>
            Effects Library
          </TopButton>
          <TopButton $wide>
            <Icon w={27} h={15} box="0 0 26 15"><path d="M0 .5h2.500v13H0M26 .5h-2.500v13H26M5.500 1.500h15v11h-15z" /><path d="M7 11l2-6 3 6zM12 11l4-8 3 4v4z" fill="currentColor" stroke="none" /></Icon>
            Clips
          </TopButton>
          <TopButton $on>
            <Icon w={22} h={18}><path d="M3.500 6.500h6v5h-6zM13.500 1.500h6v4h-6zM13.500 12.500h6v4h-6zM0 9h3M10 9l3-5M10 10l3 4M20 3.500h2M20 14.500h2" strokeWidth="1.400" /></Icon>
            Nodes
          </TopButton>
        </TopSide>
        <ProjectName>Untitled Project</ProjectName>
        <TopSide>
          <Edited>Edited</Edited>
          <TopButton>
            <Icon w={23} h={21}><path d="M0 10c6-3 9-3 13-3l9 9M7 1l6 6c1 4 0 9-2 13" />{pt(7, 2)}{pt(13, 7)}{pt(21, 15)}</Icon>
            Spline
          </TopButton>
          <TopButton>
            <Icon w={22} h={15} box="1 0 22 15"><path d="M7 1L1 7.500 7 14M11 1L5 7.500l6 6.500" stroke="#444" /><path d="M16 1l6 6.500-6 6.500-6-6.500z" fill="#555" /></Icon>
            Keyframes
          </TopButton>
          <TopButton>
            <Icon w={20} h={18}><path d="M1 7l9-4 4 4-2 7-9 3z" fill="#8a8a8a" stroke="none" /><path d="M5 9l4-2M5 12l5-2" stroke="#222" strokeWidth="1.500" /><path d="M11 7c1-5 8-8 8-3s-4 6-7 4" /></Icon>
            Metadata
          </TopButton>
          <TopButton $on>
            <Icon w={21} h={18} box="-3 0 21 18"><path d="M1 1l9 10" strokeWidth="2" /><path d="M11 11l4 4" strokeWidth="5" strokeLinecap="round" /><path d="M2 16l8-8" strokeWidth="3" strokeLinecap="round" /><path d="M14 1a3 3 0 103 4" strokeWidth="2.500" /></Icon>
            Inspector
          </TopButton>
          <TopButton aria-label="Collapse panel">
            <Icon w={28} h={18} box="-2 0 28 18"><path d="M.5 1.500h16v9H.5zM4.500 16l4-4 4 4" /></Icon>
          </TopButton>
        </TopSide>
      </TopBar>

      <Work>
        <LeftCol>
          <Upper>
            <Effects>
              <PanelHead>
                <PanelTitle>Effects</PanelTitle>
                <HeadButton aria-label="Search effects"><Icon w={12} h={12}><circle cx="4.500" cy="4.500" r="4" /><path d="M7.500 7.500l4 4" /></Icon></HeadButton>
                <HeadButton $divider aria-label="Effects options"><Dots /></HeadButton>
              </PanelHead>
              <EffectsBody>
                <Tree>
                  {tree.map((t, i) => (
                    <TreeItem key={t} $on={i === 0}>
                      <button><Icon w={8} h={10}><path d="M1 1l5 4-5 4" strokeWidth="1.500" /></Icon>{t}</button>
                    </TreeItem>
                  ))}
                </Tree>
                <ToolList>
                  <ToolsCaption>Tools</ToolsCaption>
                  <EffectGroup title="Light" items={["Ambient Light", "Directional Light", "Point Light", "Spot Light"]} />
                  <EffectGroup title="Material" items={["Blinn", "Channel Boolean", "CookTorrance", "Material Merge"]} />
                </ToolList>
                <Scroller />
              </EffectsBody>
            </Effects>

            <Center>
              <Viewers>
                <Viewer>
                  <ViewerHeader zoom="166%" title="InsideText" />
                  <Canvas $x={-2}><BigStrip><span>PLE</span> <span>TITLE</span></BigStrip></Canvas>
                </Viewer>
                <Viewer>
                  <ViewerHeader zoom="Fit" title="MediaOut1" />
                  <MediaArea><Canvas $x={1}><SmallStrip><span>SIMPLE</span> <span>TITLE</span></SmallStrip></Canvas></MediaArea>
                </Viewer>
              </Viewers>
              <Ruler>
                {Array.from({ length: 36 }, (_, i) => (
                  <Tick key={i} $on={i === 2 || i === 20}>{i * 5}</Tick>
                ))}
                <RangeBar /><RangeBar $end /><Playhead />
                <Cached $from={0} $to={8} /><Cached $from={47} $to={48} />
              </Ruler>
              <TimeScroll />
              <Transport>
                <TransportSide>
                  <TimeField aria-label="Range start" defaultValue="0.0" />
                  <TimeField aria-label="Range end" defaultValue="179.0" />
                  <MuteButton aria-label="Mute">
                    <Icon w={18} h={14}><path d="M1 5v4h3l4 4V1L4 5z" strokeWidth="1.600" /><path d="M11 4.500c1.500 1.500 1.500 3.500 0 5M14 2c3 3 3 7 0 10" strokeWidth="1.500" /></Icon>
                  </MuteButton>
                </TransportSide>
                <PlayButtons>
                  <button aria-label="First frame"><Icon w={20} h={14}><path d="M1 0v14" strokeWidth="1.500" /><path d="M11 1v12L2 7zM20 1v12L11 7z" fill="currentColor" stroke="none" /></Icon></button>
                  <button aria-label="Play reverse"><Icon w={10} h={14}><path d="M10 0v14L0 7z" fill="currentColor" stroke="none" /></Icon></button>
                  <button aria-label="Stop"><Icon w={13} h={13}><path d="M0 0h13v13H0z" fill="currentColor" stroke="none" /></Icon></button>
                  <button aria-label="Play"><Icon w={10} h={14}><path d="M0 0v14l10-7z" fill="currentColor" stroke="none" /></Icon></button>
                  <button aria-label="Last frame"><Icon w={20} h={14}><path d="M19 0v14" strokeWidth="1.500" /><path d="M0 1v12l9-6zM9 1v12l9-6z" fill="currentColor" stroke="none" /></Icon></button>
                  <button aria-label="Loop"><Icon w={21} h={17}><g stroke={c.red} strokeWidth="1.800"><path d="M15 4.500h1a4.500 5 0 010 10.500H6A4.500 5 0 016 4.500h6" /><path d="M9 .5l4 4-4 4" /></g></Icon></button>
                </PlayButtons>
                <TransportSide $end><TimeField $big aria-label="Current frame" defaultValue="47.0" /></TransportSide>
              </Transport>
            </Center>
          </Upper>

          <Strip>
            {stripIcons.map((g, i) => (
              <StripGroup key={i}>
                {g.map((art, j) => <StripButton key={j} aria-label={`Tool ${i + 1}.${j + 1}`}><Icon>{art}</Icon></StripButton>)}
              </StripGroup>
            ))}
          </Strip>

          <NodesPanel>
            <PanelHead $red>
              <PanelTitle>Nodes</PanelTitle>
              <HeadButton $divider aria-label="Nodes options"><Dots /></HeadButton>
            </PanelHead>
            <Flow>
              <GroupBox>
                <GroupHead>
                  <Icon w={10} h={10}><path d="M1.500 1l6 8M7.500 1l-6 8" strokeWidth="1.300" /></Icon>
                  TextBoxSwipeIn_LowerThird
                  <Icon w={12} h={12}><path d="M6 1v10M1 6h10M4 3l2-2 2 2M4 9l2 2 2-2M3 4L1 6l2 2M9 4l2 2-2 2" /></Icon>
                </GroupHead>
                <GroupBody />
              </GroupBox>
              <NodeBox $x={121} $y={103} $tone="#5a9a2c" $left>
                InsideText
                <Icon w={10} h={10}><path d="M5 0l4.500 5L5 10 .5 5z" fill="#fff" stroke="none" /><path d="M5.500 1.500L8.500 5l-3 3.500z" fill="#222" stroke="none" /></Icon>
              </NodeBox>
              <NodeBox $x={300} $y={103} $tone="#5a9a2c">BoxColor</NodeBox>
              <NodeBox $x={481} $y={103} $tone="#9a9a9a">KeyframeStretcher</NodeBox>
              <NodeBox $x={1040} $y={111} $tone="#7ba7c9">MediaOut1</NodeBox>
              <ViewDots $x={127} $y={131} />
              <ViewDots $x={1046} $y={139} $second />
              <Wires aria-hidden="true">
                <g stroke="#d8d8d8" strokeWidth="1.300"><path d="M260 117h31M439 117h32M619 117l16-18" fill="none" /></g>
                <path d="M650 103.500l383 21" stroke="#f4c820" strokeWidth="2" />
                <g stroke="#111" strokeWidth="1">
                  <path d="M111.500 111v13l8-6.500zM290.500 111v13l9-6.500z" fill="#28a8e8" />
                  <path d="M471.500 111v13l9-6.500zM1030.500 119v13l9-6.500z" fill="#f4c820" />
                  <path d="M251.500 113.500h8v8h-8zM430.500 113.500h8v8h-8zM611.500 113.500h8v8h-8zM642.500 99.500h8v8h-8z" fill="#fff" />
                  <path d="M1170.500 121.500h8v8h-8z" fill="#a8a8a8" />
                </g>
              </Wires>
            </Flow>
          </NodesPanel>
        </LeftCol>

        <Inspector>
          <PanelHead>
            <PanelTitle>Inspector</PanelTitle>
            <HeadButton $divider aria-label="Inspector options"><Dots /></HeadButton>
          </PanelHead>
          <TabPill><PillButton $on>Tools</PillButton><PillButton>Modifiers</PillButton></TabPill>
          <NameRow>
            <Toggle aria-label="Enable node" />
            <NodeName>TextBoxSwipeIn_LowerThird</NodeName>
            <Swatch aria-label="Node colour" />
            <Chevron />
            <NameIcons>
              <button aria-label="Versions"><Icon w={16} h={13}><path d="M.5 3.500h12v8H.5zM3 3V.5h12v8H13" strokeWidth="1.200" /></Icon></button>
              <button aria-label="Pin"><Icon w={15} h={14}><path d="M9 0l5 5-2 1-2 3v2L4 5h2l3-3z" fill="currentColor" stroke="none" /><path d="M6 8l-6 6" strokeWidth="1.500" /></Icon></button>
              <button aria-label="Lock"><Icon w={13} h={14}><path d="M.5 6.500h11v6H.5zM3 4c0-5 7-4 7-1v3" strokeWidth="1.200" /></Icon></button>
            </NameIcons>
          </NameRow>
          <ModeTabs>
            <ModeTab $on><Icon w={22} h={16}><path d="M1 .5h20v15H1z" strokeWidth="1.300" /><path d="M5 5.500h12M5 10.500h12" /><path d="M12 4h2v3h-2zM8 9h2v3H8z" fill="currentColor" /></Icon>Controls</ModeTab>
            <ModeTab><Icon w={26} h={16}><path d="M14 15.500H.5V.5h20V5" /><circle cx="19.500" cy="10.500" r="3.200" strokeWidth="1.500" /><circle cx="19.500" cy="10.500" r="4.600" strokeDasharray="2 2" /></Icon>Settings</ModeTab>
          </ModeTabs>
          <Section><Icon w={10} h={10}><path d="M1 2.500L5 7l4-4.500" strokeWidth="1.800" /></Icon>Text</Section>
          <TextRow><TextBox aria-label="Styled text" defaultValue="SIMPLE TITLE" /><KeyButton name="text" /></TextRow>
          <Field>
            <FieldLabel htmlFor="font">Font</FieldLabel>
            <Control><SelectWrap><Select id="font"><option>Open Sans</option></Select><Chevron /></SelectWrap></Control>
            <KeyButton name="font" />
          </Field>
          <Field>
            <span />
            <Control><SelectWrap><Select aria-label="Font style"><option>Extrabold</option></Select><Chevron /></SelectWrap></Control>
          </Field>
          <Field>
            <FieldLabel htmlFor="colour">Color</FieldLabel>
            <Control>
              <ColorWell id="colour" aria-label="Color" />
              <PickButton aria-label="Pick colour"><Icon w={18} h={18}><path d="M2 17l8-9" strokeWidth="2" /><path d="M8 5l5 5" strokeWidth="2" /><path d="M11 7l4-5" strokeWidth="3.500" /></Icon></PickButton>
            </Control>
            <KeyButton name="colour" />
          </Field>
          <SlideField id="size" label="Size" pos={9} value="0.0472" />
          <SlideField id="tracking" label="Tracking" pos={27} value="1.071" mark />
          <SlideField id="leading" label="Line Spacing" pos={17} value="0.693" />
          <IconField label="V Anchor" names={["Top", "Middle", "Bottom"]} icons={[
            <><path d="M0 2.500h18" strokeDasharray="1 1" /><path d="M3.500 5.500h11v7h-11z" /></>,
            <><path d="M0 8.500h18" strokeDasharray="1 1" /><path d="M3.500 7V5.500h11V7M3.500 10v1.500h11V10" /></>,
            <><path d="M0 12.500h18" strokeDasharray="1 1" /><path d="M3.500 2.500h11v7h-11z" /></>,
          ]} />
          <SlideField id="vanchor" label="V Anchor" pos={100} value="1.0" ends={["Top", "Bottom"]} />
          <IconField label="H Anchor" names={["Left", "Center", "Right"]} icons={[
            <><path d="M2.500 1v15" strokeDasharray="1 1" /><path d="M5.500 5.500h11v7h-11z" /></>,
            <><path d="M9.500 1v15" strokeDasharray="1 1" /><path d="M8 5.500H3.500v7H8M11 5.500h4.500v7H11" /></>,
            <><path d="M15.500 1v15" strokeDasharray="1 1" /><path d="M2.500 5.500h11v7h-11z" /></>,
          ]} />
          <SlideField id="hanchor" label="H Anchor" pos={0} value="-1.0" ends={["Left", "Right"]} />
          <IconField label="Emphasis" names={["Strikethrough", "Underline"]} keyed icons={[
            <path d="M5.500 5V3.500h8V5M9.500 3.500v10M7.500 13.500h4M3 8.500h13" strokeWidth="1.400" />,
            <path d="M5.500 4V2.500h8V4M9.500 2.500v8M7.500 10.500h4M3 14.500h13" strokeWidth="1.400" />,
          ]} />
          <Rule />
          <Field>
            <span />
            <Control>
              <Check type="checkbox" id="blur" />
              <label htmlFor="blur">Motion Blur</label>
            </Control>
            <KeyButton name="motion blur" />
          </Field>
          <Rule $flush />
          <Section><Icon w={10} h={10}><path d="M3 1l4 4-4 4" strokeWidth="1.800" /></Icon>BoxColor</Section>
          <EndLine />
        </Inspector>
      </Work>

      <Status>13% - 4205 MB</Status>

      <PageBar>
        <Brand>
          <Icon w={18} h={18}><g fill="#fff" stroke="none"><path d="M9 0c4 0 4 6 0 9C5 6 5 0 9 0z" /><path d="M0 14c0-4 5-6 8-3 1 4-1 7-4 7-2 0-4-2-4-4z" /><path d="M18 14c0-4-5-6-8-3-1 4 1 7 4 7 2 0 4-2 4-4z" /></g></Icon>
          DaVinci Resolve 17
        </Brand>
        <PageTabs>
          {pages.map((n) => (
            <PageTab key={n} $on={n === "Fusion"}><PageIcon name={n} />{n}</PageTab>
          ))}
        </PageTabs>
        <PageEnd>
          <button aria-label="Project manager"><Icon w={14} h={14}><path d="M7 0L0 7h2v7h4V9h2v5h4V7h2z" fill="currentColor" stroke="none" /></Icon></button>
          <button aria-label="Project settings"><Icon w={16} h={16}><circle cx="8" cy="8" r="4.500" strokeWidth="2" /><circle cx="8" cy="8" r="6.500" strokeWidth="2.500" strokeDasharray="2.100 3" /></Icon></button>
        </PageEnd>
      </PageBar>

      <Taskbar>
        <TaskButton aria-label="Start"><Icon w={20} h={20}><path d="M0 3l8-1v7.500H0zM9 2l11-2v9.500H9zM0 10.500h8V18l-8-1zM9 10.500h11V20L9 18z" fill="#fff" stroke="none" /></Icon></TaskButton>
        <SearchBox>
          <Icon w={20} h={20}><circle cx="12.500" cy="7.500" r="6.500" strokeWidth="1.500" /><path d="M8 12l-8 8" strokeWidth="1.500" /></Icon>
          <SearchInput aria-label="Search" placeholder="Type here to search" />
        </SearchBox>
        <TaskButton aria-label="Cortana"><Icon w={20} h={20}><circle cx="10" cy="10" r="8.500" strokeWidth="2.500" /></Icon></TaskButton>
        <TaskButton aria-label="Task view"><Icon w={20} h={20}><path d="M0 0v3.500h13V0M1 5.500h11v9H1zM0 20v-3.500h13V20M17.500 0v5M17.500 11v9" strokeWidth="1.300" /><path d="M16 6h3v3h-3z" fill="currentColor" stroke="none" /></Icon></TaskButton>
        <Apps>
          <TaskApp $open aria-label="Edge">
            <Icon w={30} h={30}>
              <circle cx="15" cy="15" r="15" fill="#1479cf" stroke="none" />
              <path d="M1 11C4-3 27-3 30 13c1 7-8 9-11 6 2-4 0-8-5-8-5-1-10 0-13 5z" fill="#35c1c4" stroke="none" />
              <path d="M22 3c5 2 8 6 8 11 0 6-7 8-11 5 6-4 6-10 3-16z" fill="#62d84e" stroke="none" />
              <path d="M10 17c0 6 6 10 17 6-5 8-17 8-21-1-2-5 2-10 8-11-2 1-4 3-4 6z" fill="#0f4f9f" stroke="none" />
            </Icon>
          </TaskApp>
          <TaskApp $open aria-label="File Explorer">
            <Icon w={28} h={26}><path d="M0 2h11l2 3h15v20H0z" fill="#e5a50a" stroke="none" /><path d="M0 5h28v19H0z" fill="#fcd462" stroke="none" /><path d="M5 25V15h18v10h-5v-5h-8v5z" fill="#3d8fdd" stroke="none" /></Icon>
          </TaskApp>
          <TaskApp aria-label="Store">
            <Icon w={30} h={30}><path d="M9 9V1h12v8" stroke="#ccc" strokeWidth="2" /><path d="M1 8h28v22H1z" fill="#f2f2f2" stroke="none" /><path d="M9 13h5v5H9z" fill="#f25022" stroke="none" /><path d="M15 13h5v5h-5z" fill="#7fba00" stroke="none" /><path d="M9 19h5v5H9z" fill="#00a4ef" stroke="none" /><path d="M15 19h5v5h-5z" fill="#ffb900" stroke="none" /></Icon>
          </TaskApp>
          <TaskApp aria-label="Mail">
            <Icon w={30} h={28}><path d="M0 10L15 0l15 10z" fill="#0a5fb4" stroke="none" /><path d="M0 9h30v19H0z" fill="#28a8ea" stroke="none" /><path d="M0 10h30L15 20z" fill="#f4f4f4" stroke="none" /><path d="M30 10v18L15 19z" fill="#1583d8" stroke="none" /></Icon>
          </TaskApp>
          <TaskApp aria-label="Chrome">
            <Icon w={28} h={28}><circle cx="14" cy="14" r="14" fill="#db4437" stroke="none" /><path d="M2 7l8 13 4 8A14 14 0 012 7z" fill="#0f9d58" stroke="none" /><path d="M14 8h13a14 14 0 01-13 20l6-11z" fill="#ffcd40" stroke="none" /><circle cx="14" cy="14" r="6.500" fill="#fff" stroke="none" /><circle cx="14" cy="14" r="5.200" fill="#4285f4" stroke="none" /></Icon>
          </TaskApp>
          <TaskApp $open aria-label="qBittorrent">
            <Icon w={30} h={30}><circle cx="15" cy="15" r="14" fill="#4a85d0" stroke="#9cc3f5" strokeWidth="1.500" /><text x="15" y="20" textAnchor="middle" fontSize="17" fill="#fff" stroke="none">qb</text></Icon>
          </TaskApp>
          <TaskApp $open aria-label="Resource Monitor">
            <Icon w={26} h={26}><path d="M1 5l4-2v16l-4 1z" fill="#888" stroke="none" /><path d="M5 2l20 2v15L5 17z" fill="#f0f0f0" stroke="#bbb" /><path d="M7 13l3-1 2-6 2 8 2-5 2 4 5 0" stroke="#4a90c4" /><ellipse cx="13" cy="22" rx="7" ry="3.500" fill="#cfcfcf" stroke="none" /></Icon>
          </TaskApp>
          <TaskApp $open $active aria-label="DaVinci Resolve"><DavinciLogo size={24} /></TaskApp>
        </Apps>
        <Tray>
          <TrayButton aria-label="Hidden icons"><Icon w={16} h={9}><path d="M1 8l7-7 7 7" strokeWidth="1.400" /></Icon></TrayButton>
          <TrayButton aria-label="Battery"><Icon w={20} h={15}><path d="M6 3.500h12v9H5v-4" strokeWidth="1.300" /><path d="M7 5h9v6H7zM18 6h2v4h-2z" fill="#fff" stroke="none" /><path d="M1.500 0v3M4.500 0v3M0 3h6v2L3 7zM3 7v6h2" /></Icon></TrayButton>
          <TrayButton aria-label="Upload"><Icon w={20} h={14}><path d="M5 14a5 5 0 010-9 6 6 0 0111 0 4.500 4.500 0 010 9z" fill="#fff" stroke="none" /><path d="M10 12V6M7 8.500l3-3 3 3" stroke="#222" strokeWidth="2" /></Icon></TrayButton>
          <TrayButton aria-label="OneDrive"><Icon w={20} h={14}><path d="M4 13a4 4 0 010-8 6 6 0 0111-1 4.500 4.500 0 011 9z" fill="#a8a8a8" stroke="none" /><path d="M1 10l5-3 4 1 6-2c3 0 4 2 4 4s-1 3-3 3H4c-2 0-3-1-3-3z" fill="#f4f4f4" stroke="none" /></Icon></TrayButton>
          <TrayButton aria-label="Network"><Icon w={16} h={16}><path d="M1 15C1 7 7 1 15 1M5 15C5 9 9 5 15 5M9 15c0-3 3-6 6-6" strokeWidth="1.300" /><circle cx="14" cy="14" r="1.800" fill="#fff" stroke="none" /></Icon></TrayButton>
          <TrayButton aria-label="Volume"><Icon w={20} h={16}><path d="M1 5.500h3l4-4v13l-4-4H1z" strokeWidth="1.200" /><path d="M11 5.500c1.500 1.500 1.500 3.500 0 5M14 3c3 3 3 7 0 10" /><path d="M17 1c4 4 4 10 0 14" stroke="#777" /></Icon></TrayButton>
          <TaskButton $w={38} aria-label="Pen workspace"><Icon w={20} h={22}><path d="M6 19l1-5L13 2c1-2 4-1 3 1L10 15zM8 11c-5-1-9 4-7 7 2 4 7 2 7-2M12 12l6-4c2 0 1 3-1 4-1 1-2 2 0 2" strokeWidth="1.300" /></Icon></TaskButton>
          <Clock>12:38 PM<br />3/25/2021</Clock>
          <Notice aria-label="Notifications"><Icon w={20} h={20}><path d="M0 0h20v16H8l-4 4v-4H0z" fill="#fff" stroke="none" /><path d="M4 4.500h12M4 8h12M4 11.500h7" stroke="#222" /></Icon><Badge>3</Badge></Notice>
          <Peek aria-label="Show desktop" />
        </Tray>
      </Taskbar>
    </Page>
  );
}
